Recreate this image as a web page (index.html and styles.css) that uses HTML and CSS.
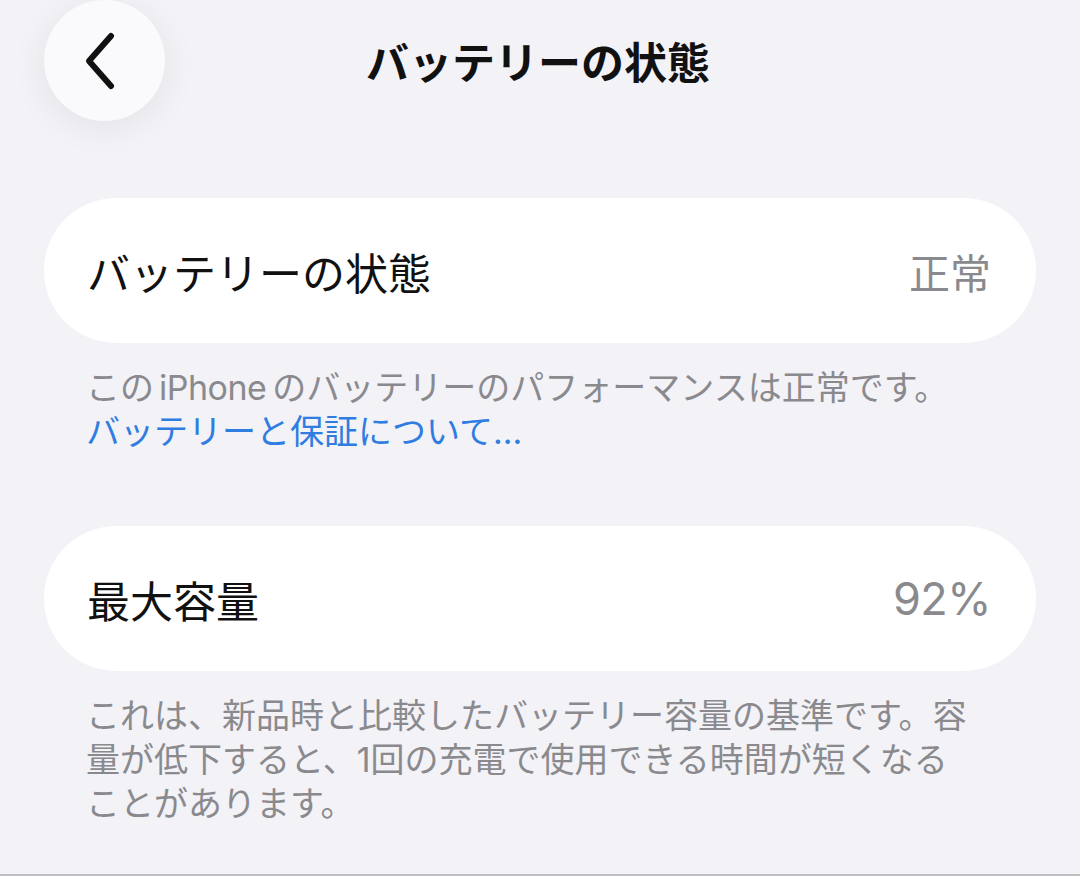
FILE: index.html
```html
<!DOCTYPE html>
<html lang="ja">
<head>
<meta charset="utf-8">
<title>バッテリーの状態</title>
<link rel="stylesheet" href="styles.css">
</head>
<body>
<div class="screen">
  <header class="nav">
    <div class="nav-left">
      <div class="back-btn">
        <svg class="chev" viewBox="0 0 40 60" width="40" height="60">
          <path d="M29 5 L7 30 L29 55" fill="none" stroke="#111" stroke-width="6" stroke-linecap="round" stroke-linejoin="round"/>
        </svg>
      </div>
    </div>
    <h1 class="nav-title">バッテリーの状態</h1>
    <div class="nav-right"></div>
  </header>

  <section class="group first">
    <div class="card">
      <span class="label">バッテリーの状態</span>
      <span class="value">正常</span>
    </div>
    <div class="footer">
      <p>この<span class="lat">iPhone</span>のバッテリーのパフォーマンスは正常です。</p>
      <p class="link">バッテリーと保証について...</p>
    </div>
  </section>

  <section class="group second">
    <div class="card">
      <span class="label">最大容量</span>
      <span class="value num">92%</span>
    </div>
    <div class="footer">
      <p>これは、新品時と比較したバッテリー容量の基準です。容量が低下すると、1回の充電で使用できる時間が短くなることがあります。</p>
    </div>
  </section>

  <div class="bottom-edge"></div>
</div>
</body>
</html>
```

FILE: styles.css
```css
* { box-sizing: border-box; }

html, body {
  margin: 0;
  padding: 0;
  background: #f2f2f7;
}

body {
  font-family: "Inter", "Noto Sans CJK JP", sans-serif;
  color: #111;
}

.screen {
  width: 1080px;
  height: 876px;
  display: flex;
  flex-direction: column;
  overflow: hidden;
}

.nav {
  display: grid;
  grid-template-columns: 1fr auto 1fr;
  align-items: center;
  height: 121px;
  padding: 0 44px;
}

.back-btn {
  width: 121px;
  height: 121px;
  border-radius: 50%;
  background: #fafafc;
  box-shadow: 0 6px 36px rgba(0, 0, 0, 0.07);
  display: flex;
  align-items: center;
  justify-content: center;
}

.chev {
  display: block;
  margin-left: -6px;
}

.nav-title {
  margin: 0;
  font-family: "Noto Sans CJK JP", sans-serif;
  font-size: 43px;
  font-weight: 700;
  line-height: 1;
  color: #111;
  transform: translateX(-2px);
}

.group {
  padding: 0 44px;
}

.group.first {
  margin-top: 77px;
}

.group.second {
  margin-top: 72px;
}

.card {
  height: 145px;
  background: #ffffff;
  border-radius: 72px;
  display: flex;
  align-items: center;
  justify-content: space-between;
  padding: 0 45px 0 43px;
}

.label {
  font-family: "Noto Sans CJK JP", sans-serif;
  font-size: 43px;
  font-weight: 400;
  color: #111;
}

.value {
  font-family: "Noto Sans CJK JP", sans-serif;
  font-size: 41px;
  color: #8a8a8e;
}

.value.num {
  font-family: "Inter", sans-serif;
  font-size: 45px;
  letter-spacing: -0.5px;
}

.footer {
  margin-top: 23px;
  padding: 0 64px 0 42px;
  font-size: 34px;
  line-height: 44px;
  color: #8a8a8e;
}

.footer p {
  margin: 0;
}

.lat {
  font-family: "Inter", sans-serif;
  letter-spacing: -0.5px;
  margin: 0 6px 0 5px;
}

.link {
  color: #2f7de1;
}

.bottom-edge {
  margin-top: auto;
  height: 2px;
  background: #bdbdc2;
}
```
